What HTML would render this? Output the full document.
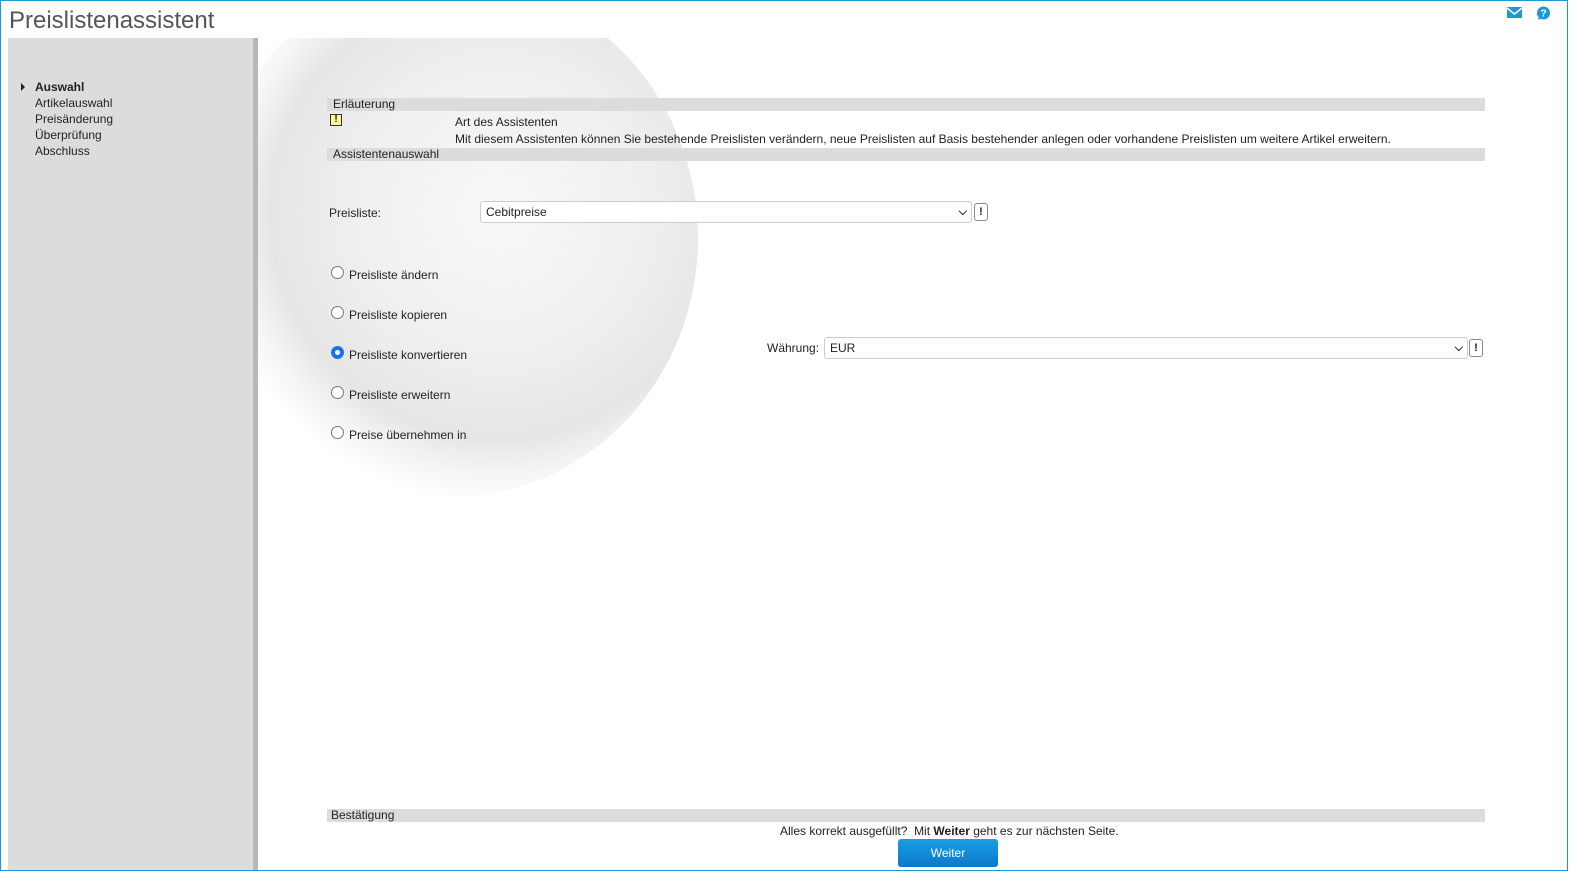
<!DOCTYPE html>
<html><head><meta charset="utf-8"><style>
*{box-sizing:border-box}
body{margin:0;width:1573px;height:874px;overflow:hidden;background:#fff;font-family:"Liberation Sans",Arial,sans-serif;font-size:12px;color:#222;position:relative}
.frame{position:absolute;left:0;top:0;width:1568px;height:871px;border:1px solid #1a9ad6}
.a{position:absolute}
.title{left:9px;top:7px;font-size:24px;color:#555}
.side{left:8px;top:38px;width:245px;height:832px;background:#dcdcdc}
.strip{left:253px;top:38px;width:5px;height:832px;background:#b8b8b8}
.nav{left:35px;font-size:12px;color:#222}
.bar{left:327px;width:1158px;height:13px;background:#dcdcdc;font-size:12px;line-height:13px;padding-left:6px;color:#222}
.sel{height:22px;border:1px solid #ccc;border-radius:3px;background:#fff;padding-left:5px;line-height:20px;font-size:12px}
.chev{position:absolute;right:4px;top:0;font-size:11px;font-weight:bold}
.ex{width:14px;height:18px;border:1px solid #888;border-radius:3px;background:#fff;text-align:center;font-weight:bold;font-size:11px;line-height:16px}
.radio{width:13px;height:13px;border:1px solid #777;border-radius:50%;background:#fff;left:331px}
.rl{left:349px}
</style></head><body>
<div class="a" style="left:258px;top:38px;width:500px;height:500px;overflow:hidden">
<div class="a" style="left:-60px;top:-60px;width:500px;height:520px;border-radius:50%;background:radial-gradient(circle at 60% 45%,#f8f8f8 0%,#efefef 35%,#e6e6e6 55%,rgba(240,240,240,.6) 64%,rgba(255,255,255,0) 71%)"></div>
</div>
<div class="a title">Preislistenassistent</div>
<div class="a side"></div><div class="a strip"></div>
<div class="a" style="left:21px;top:83px;width:0;height:0;border-left:4px solid #222;border-top:4px solid transparent;border-bottom:4px solid transparent"></div>
<div class="a nav" style="top:80px;font-weight:bold">Auswahl</div>
<div class="a nav" style="top:96px">Artikelauswahl</div>
<div class="a nav" style="top:112px">Preisänderung</div>
<div class="a nav" style="top:128px">Überprüfung</div>
<div class="a nav" style="top:144px">Abschluss</div>
<svg class="a" style="left:1507px;top:7px" width="15" height="12"><rect width="15" height="11" fill="#1a9ad6"/><path d="M0 1 L7.5 7 L15 1" stroke="#fff" stroke-width="1.5" fill="none"/></svg>
<svg class="a" style="left:1536px;top:6px" width="15" height="15"><circle cx="7.5" cy="7" r="6.5" fill="#1a9ad6"/><path d="M3 11 L2 14 L6 12Z" fill="#1a9ad6"/><text x="7.5" y="10.5" font-size="10" font-weight="bold" fill="#fff" text-anchor="middle" font-family="Liberation Sans">?</text></svg>
<div class="a bar" style="top:98px">Erläuterung</div>
<div class="a" style="left:330px;top:114px;width:12px;height:12px;border:1px solid #333;background:#fff59a;font-size:10px;font-weight:bold;text-align:center;line-height:10px">!</div>
<div class="a" style="left:455px;top:115px">Art des Assistenten</div>
<div class="a" style="left:455px;top:132px">Mit diesem Assistenten können Sie bestehende Preislisten verändern, neue Preislisten auf Basis bestehender anlegen oder vorhandene Preislisten um weitere Artikel erweitern.</div>
<div class="a bar" style="top:148px">Assistentenauswahl</div>
<div class="a" style="left:329px;top:206px">Preisliste:</div>
<div class="a sel" style="left:480px;top:201px;width:492px">Cebitpreise<span class="chev">&#x2335;</span></div>
<div class="a ex" style="left:974px;top:203px">!</div>
<div class="a radio" style="top:266px"></div><div class="a rl" style="top:268px">Preisliste ändern</div>
<div class="a radio" style="top:306px"></div><div class="a rl" style="top:308px">Preisliste kopieren</div>
<div class="a radio" style="top:346px;border:4px solid #1a73e8"></div><div class="a rl" style="top:348px">Preisliste konvertieren</div>
<div class="a radio" style="top:386px"></div><div class="a rl" style="top:388px">Preisliste erweitern</div>
<div class="a radio" style="top:426px"></div><div class="a rl" style="top:428px">Preise übernehmen in</div>
<div class="a" style="left:767px;top:341px">Währung:</div>
<div class="a sel" style="left:824px;top:337px;width:644px">EUR<span class="chev">&#x2335;</span></div>
<div class="a ex" style="left:1469px;top:339px">!</div>
<div class="a bar" style="top:809px;padding-left:4px">Bestätigung</div>
<div class="a" style="left:780px;top:824px">Alles korrekt ausgefüllt?&nbsp; Mit <b>Weiter</b> geht es zur nächsten Seite.</div>
<div class="a" style="left:898px;top:839px;width:100px;height:28px;border-radius:3px;background:linear-gradient(#1a9fe0,#0a78cc);color:#fff;text-align:center;line-height:28px;font-size:12px">Weiter</div>
<div class="frame a"></div>
</body></html>
